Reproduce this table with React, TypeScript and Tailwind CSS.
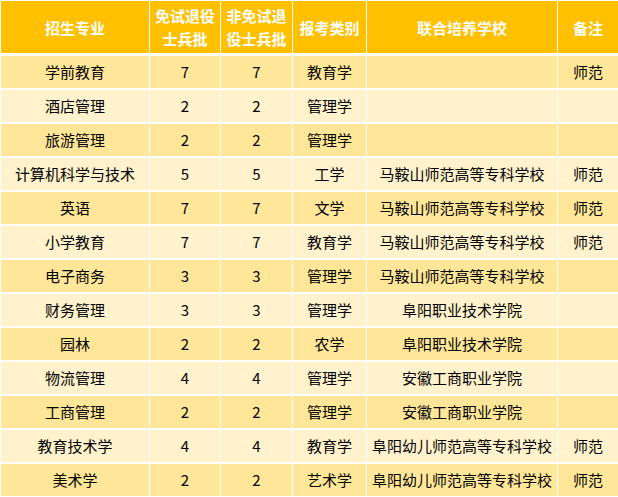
import React from "react";

const rows: [string, string, string, string, string, string][] = [
  ["学前教育", "7", "7", "教育学", "", "师范"],
  ["酒店管理", "2", "2", "管理学", "", ""],
  ["旅游管理", "2", "2", "管理学", "", ""],
  ["计算机科学与技术", "5", "5", "工学", "马鞍山师范高等专科学校", "师范"],
  ["英语", "7", "7", "文学", "马鞍山师范高等专科学校", "师范"],
  ["小学教育", "7", "7", "教育学", "马鞍山师范高等专科学校", "师范"],
  ["电子商务", "3", "3", "管理学", "马鞍山师范高等专科学校", ""],
  ["财务管理", "3", "3", "管理学", "阜阳职业技术学院", ""],
  ["园林", "2", "2", "农学", "阜阳职业技术学院", ""],
  ["物流管理", "4", "4", "管理学", "安徽工商职业学院", ""],
  ["工商管理", "2", "2", "管理学", "安徽工商职业学院", ""],
  ["教育技术学", "4", "4", "教育学", "阜阳幼儿师范高等专科学校", "师范"],
  ["美术学", "2", "2", "艺术学", "阜阳幼儿师范高等专科学校", "师范"],
];

const font = {
  fontFamily: '"Noto Sans CJK SC", "Noto Sans", sans-serif',
};

export default function App() {
  return (
    <div
      className="w-[618px] h-[497px] bg-white pt-[1px] pl-[1px] flex flex-col overflow-hidden"
      style={font}
    >
      <div className="grid grid-cols-[148px_70px_71px_73px_190px_60px] gap-x-[1px] h-[52px] text-white font-bold text-[15px] leading-[23px]">
        <div className="bg-[#FFC000] flex items-center justify-center">招生专业</div>
        <div className="bg-[#FFC000] flex flex-col items-center justify-center">
          <span>免试退役</span>
          <span>士兵批</span>
        </div>
        <div className="bg-[#FFC000] flex flex-col items-center justify-center">
          <span>非免试退</span>
          <span>役士兵批</span>
        </div>
        <div className="bg-[#FFC000] flex items-center justify-center">报考类别</div>
        <div className="bg-[#FFC000] flex items-center justify-center">联合培养学校</div>
        <div className="bg-[#FFC000] flex items-center justify-center">备注</div>
      </div>
      <div className="mt-[3px] grid grid-cols-[148px_70px_71px_73px_190px_60px] auto-rows-[32px] gap-x-[1px] gap-y-[2px] text-[15px] text-black">
        {rows.map((r, i) =>
          r.map((c, j) => (
            <div
              key={`${i}-${j}`}
              className={`${i % 2 === 0 ? "bg-[#FFE699]" : "bg-[#FFF2CC]"} flex items-center justify-center whitespace-nowrap`}
            >
              {c}
            </div>
          ))
        )}
      </div>
    </div>
  );
}
